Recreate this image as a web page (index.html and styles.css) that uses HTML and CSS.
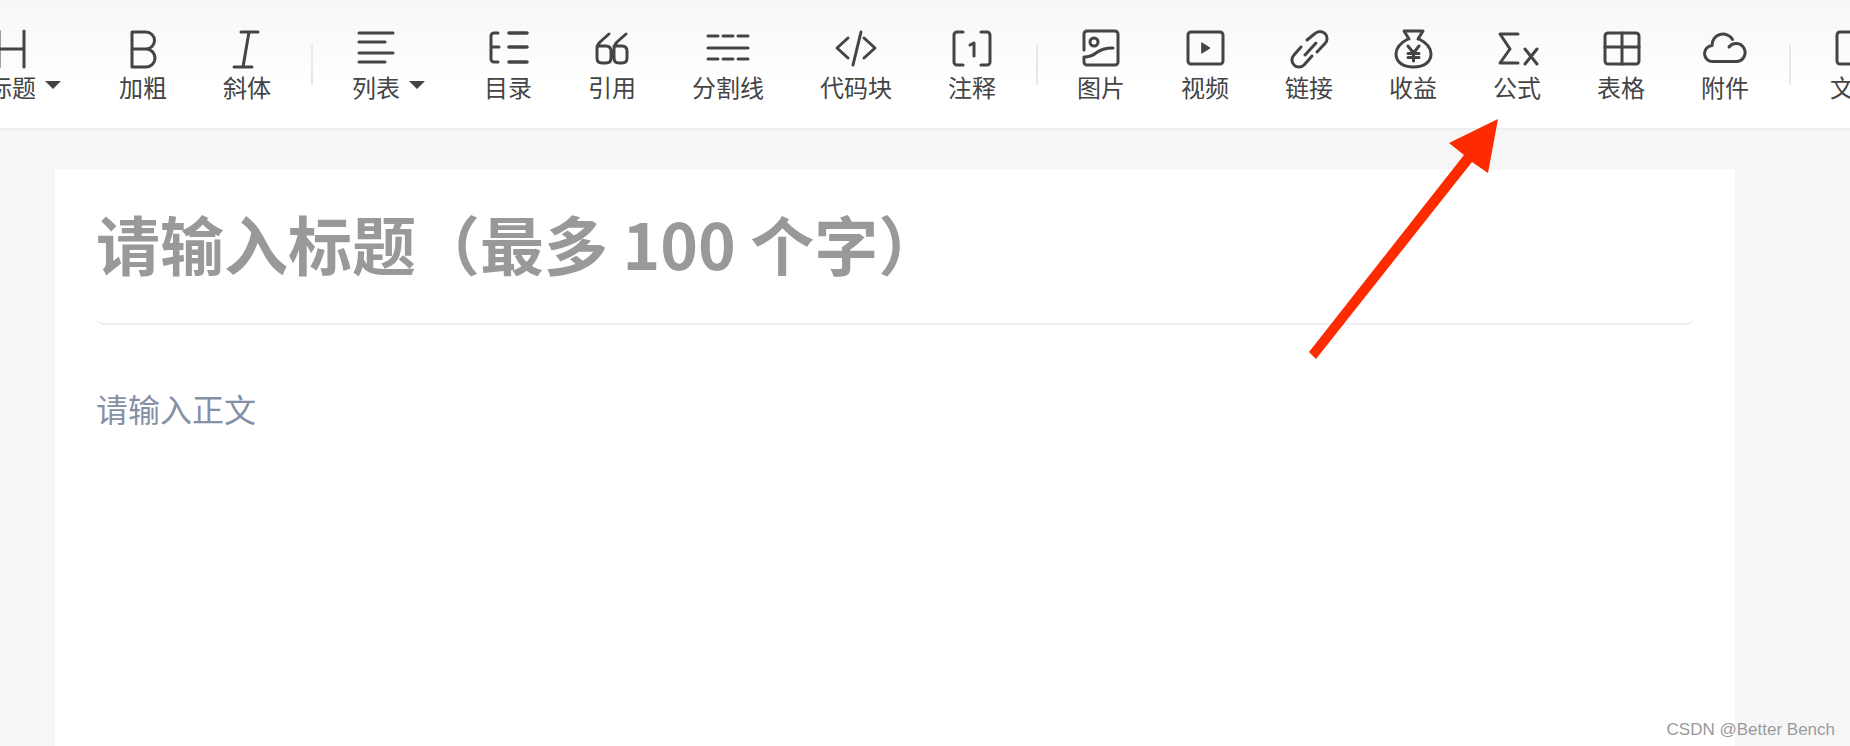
FILE: index.html
```html
<!DOCTYPE html>
<html lang="zh-CN">
<head>
  <meta charset="UTF-8">
  <title>写文章</title>
  <link rel="stylesheet" href="styles.css">
</head>
<body>
  <div class="toolbar">
    <div class="tool tool-drop tool-first">
      <svg class="icon" viewBox="0 0 48 44"><path d="M11 5V41M36 5V41M11 23H36"/></svg>
      <div class="label">标题<i class="caret"></i></div>
    </div>
    <div class="tool">
      <svg class="icon" viewBox="0 0 48 44"><path d="M13 6H27A8.5 8.5 0 0 1 27 23H13ZM27 23A9 9 0 0 1 27 41H13V23"/></svg>
      <div class="label">加粗</div>
    </div>
    <div class="tool">
      <svg class="icon" viewBox="0 0 48 44"><path d="M18 6H35M11 41H29M26 6L20 41"/></svg>
      <div class="label">斜体</div>
    </div>
    <div class="sep"></div>
    <div class="tool tool-drop">
      <svg class="icon" viewBox="0 0 48 44"><path d="M7 7H41M7 16H33M7 27H41M7 36H33"/></svg>
      <div class="label">列表<i class="caret"></i></div>
    </div>
    <div class="tool">
      <svg class="icon" viewBox="0 0 48 44"><path d="M14 7H10A3 3 0 0 0 7 10V33A3 3 0 0 0 10 36H14M7 21H15"/><path class="thick" d="M25 7H43M25 21H43M25 36H43"/></svg>
      <div class="label">目录</div>
    </div>
    <div class="tool">
      <svg class="icon" viewBox="0 0 48 44"><path d="M21 8L12 16Q9 19 9 23V32Q9 37 14 37H18Q23 37 23 32V25Q23 20 18 20H9M38 8L29 16Q26 19 26 23V32Q26 37 31 37H34Q39 37 39 32V25Q39 20 34 20H26"/></svg>
      <div class="label">引用</div>
    </div>
    <div class="tool">
      <svg class="icon" viewBox="0 0 48 44"><path d="M4 10H14M19 10H29M34 10H44M4 22H44M4 33H14M19 33H29M34 33H44"/></svg>
      <div class="label">分割线</div>
    </div>
    <div class="tool">
      <svg class="icon" viewBox="0 0 48 44"><path d="M16 12L5 22L16 32M29 6L21 39M32 12L43 22L32 32"/></svg>
      <div class="label">代码块</div>
    </div>
    <div class="tool">
      <svg class="icon" viewBox="0 0 48 44"><path d="M15 6H9A3 3 0 0 0 6 9V36A3 3 0 0 0 9 39H15M33 6H39A3 3 0 0 1 42 9V36A3 3 0 0 1 39 39H33M22 19L26 17V30"/></svg>
      <div class="label">注释</div>
    </div>
    <div class="sep"></div>
    <div class="tool">
      <svg class="icon" viewBox="0 0 48 44"><path d="M7 24V8A3 3 0 0 1 10 5H38A3 3 0 0 1 41 8V36A3 3 0 0 1 38 39H10A3 3 0 0 1 7 36V31Q14 31 19 27Q25 22 36 22"/><circle cx="17" cy="16" r="4"/></svg>
      <div class="label">图片</div>
    </div>
    <div class="tool">
      <svg class="icon" viewBox="0 0 48 44"><rect x="7" y="6" width="35" height="32" rx="3"/><path class="solid" d="M21 17L29 22L21 27Z"/></svg>
      <div class="label">视频</div>
    </div>
    <div class="tool">
      <svg class="icon" viewBox="0 0 48 44"><path d="M22 14L30 7.5A7 7 0 0 1 40 17.5L32 26M20 29L31 17M16 21L9 29A7 7 0 0 0 19 39L27 30"/></svg>
      <div class="label">链接</div>
    </div>
    <div class="tool">
      <svg class="icon" viewBox="0 0 48 44"><path d="M20 13L15 5H34L29 13M19 13C11 17 7 23 7 28C7 36 14 41 24.5 41C35 41 42 36 42 28C42 23 38 17 30 13M19 20L24.5 27L30 20M24.5 27V35M19 27.5H30M19 31.5H30"/></svg>
      <div class="label">收益</div>
    </div>
    <div class="tool">
      <svg class="icon" viewBox="0 0 48 44"><path d="M25 8H7L17 23L7 37H25M32 23L44 38M44 23L32 38"/></svg>
      <div class="label">公式</div>
    </div>
    <div class="tool">
      <svg class="icon" viewBox="0 0 48 44"><rect x="8" y="7" width="34" height="31" rx="3"/><path d="M25 7V38M8 21H42"/></svg>
      <div class="label">表格</div>
    </div>
    <div class="tool">
      <svg class="icon" viewBox="0 0 48 44"><path d="M12 35.5A8 8 0 0 1 11 19.5A11 11 0 0 1 31.5 13.5M12 35.5H36A9 9 0 1 0 28 21"/></svg>
      <div class="label">附件</div>
    </div>
    <div class="sep"></div>
    <div class="tool">
      <svg class="icon" viewBox="0 0 48 44"><rect x="7" y="6" width="36" height="32" rx="3"/></svg>
      <div class="label">文档</div>
    </div>
  </div>

  <div class="page">
    <div class="card">
      <h1 class="title">请输入标题（最多 100 个字）</h1>
      <div class="content">请输入正文</div>
    </div>
  </div>

  <svg class="arrow" viewBox="1300 110 210 260"><polygon points="1498,119 1488,173 1472,162 1316,359 1309,352 1464,155 1449,143"/></svg>
  <div class="mark">CSDN @Better Bench</div>
</body>
</html>
```

FILE: styles.css
```css
* {
  box-sizing: border-box;
}
body {
  margin: 0;
  height: 100vh;
  overflow: hidden;
  display: flex;
  flex-direction: column;
  position: relative;
  background: #f6f6f6;
  font-family: "Noto Sans CJK SC", "Noto Sans", sans-serif;
}
.toolbar {
  display: flex;
  align-items: flex-start;
  height: 130px;
  padding-top: 26px;
  margin-left: -40px;
  background: linear-gradient(#f7f7f7, #fff 70%);
  border-bottom: 2px solid #eee;
  flex-shrink: 0;
}
.tool {
  flex-shrink: 0;
  padding: 0 28px;
  display: flex;
  flex-direction: column;
  align-items: center;
}
.tool-drop {
  padding-right: 56px;
}
.tool-first {
  padding-right: 55px;
}
.icon {
  display: block;
  width: 48px;
  height: 44px;
  fill: none;
  stroke: #444;
  stroke-width: 3;
  stroke-linecap: round;
  stroke-linejoin: round;
}
.icon .thick {
  stroke-width: 3.6;
}
.icon .solid {
  fill: #444;
  stroke-width: 1;
}
.label {
  display: flex;
  align-items: center;
  justify-content: center;
  margin-top: 2px;
  font-size: 24px;
  line-height: 30px;
  color: #444;
  white-space: nowrap;
}
.caret {
  flex-shrink: 0;
  width: 0;
  height: 0;
  margin-left: 9px;
  margin-right: -25px;
  margin-top: -4px;
  border-left: 8px solid transparent;
  border-right: 8px solid transparent;
  border-top: 8px solid #444;
}
.sep {
  flex-shrink: 0;
  width: 2px;
  height: 40px;
  margin: 19px 11.5px 0;
  background: #e8e8e8;
}
.page {
  flex: 1;
  padding: 39px 115px 0 55px;
  min-height: 0;
}
.card {
  height: 100%;
  background: #fff;
  padding: 0 41px;
}
.title {
  margin: 0;
  height: 156px;
  padding-top: 28px;
  border-bottom: 2px solid #eee;
  border-radius: 8px;
  font-size: 64px;
  line-height: 90px;
  font-weight: 700;
  color: #999;
  white-space: nowrap;
}
.content {
  margin-top: 60px;
  font-size: 32px;
  line-height: 46px;
  color: #8590a6;
}
.arrow {
  position: absolute;
  left: 1300px;
  top: 110px;
  width: 210px;
  height: 260px;
  fill: #fe2a00;
}
.mark {
  position: absolute;
  right: 15px;
  bottom: 6px;
  font-family: "Liberation Sans", sans-serif;
  font-size: 17px;
  line-height: 20px;
  color: #999;
  text-shadow: 0 0 1px #fff;
}
```
